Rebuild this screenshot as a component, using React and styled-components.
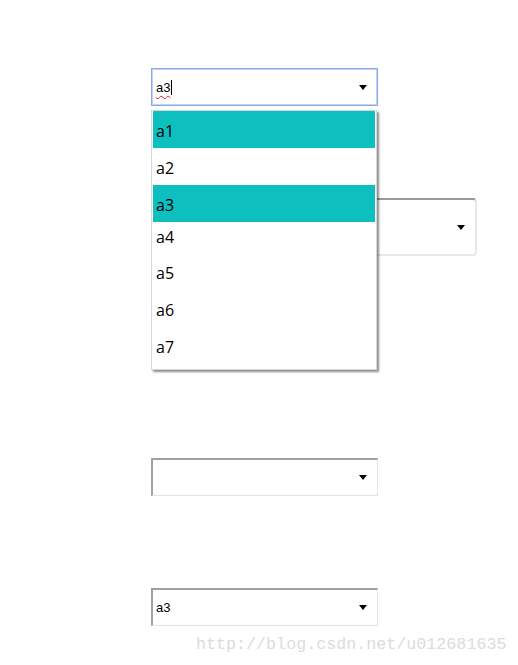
import React from "react";
import styled, { createGlobalStyle } from "styled-components";

const GlobalStyle = createGlobalStyle`
  html, body {
    margin: 0;
    padding: 0;
    background: #ffffff;
  }
  body {
    font-family: "Liberation Sans", Arial, sans-serif;
  }
`;

const Page = styled.div`
  position: relative;
  width: 518px;
  height: 665px;
  padding: 68px 0 0 151px;
  box-sizing: border-box;
  display: flex;
  flex-direction: column;
  align-items: flex-start;
`;

const Field = styled.div`
  position: relative;
  box-sizing: border-box;
  width: ${(p) => p.$width || 227}px;
  height: ${(p) => p.$height || 38}px;
  margin-top: ${(p) => p.$top || 0}px;
  display: flex;
  align-items: center;
  padding: 0 10px 0 3px;
  background: #ffffff;
  border-style: solid;
  border-width: 2px 1px 1px 2px;
  border-color: #a0a0a0 #e2e2e2 #e2e2e2 #a0a0a0;
  border-radius: 0;

  ${(p) => p.$focus && `
    border-width: 1px;
    border-color: #8aa7e6;
    box-shadow: inset 0 0 0 1px #c3d3f4;
    padding-left: 4px;
  `}

  ${(p) => p.$soft && `
    border-width: 2px;
    border-radius: 4px;
    border-color: #9a9a9a #e8e8e8 #e8e8e8 #e8e8e8;
  `}
`;

const Value = styled.span`
  flex: 1;
  font-size: 13px;
  color: #000000;
  line-height: 1;
`;

const Typed = styled.span`
  text-decoration: underline wavy #e02020;
  text-decoration-thickness: 1px;
  text-underline-offset: 3px;
`;

const Caret = styled.span`
  display: inline-block;
  width: 1px;
  height: 15px;
  margin-left: 1px;
  vertical-align: -3px;
  background: #000000;
`;

const Arrow = styled.span`
  width: 0;
  height: 0;
  border-left: 4.5px solid transparent;
  border-right: 4.5px solid transparent;
  border-top: 5px solid #000000;
`;

const Menu = styled.ul`
  position: absolute;
  left: 151px;
  top: 110px;
  width: 226px;
  margin: 0;
  padding: 0 0 5px;
  list-style: none;
  box-sizing: border-box;
  background: #ffffff;
  border: 1px solid #d8d8d8;
  box-shadow: 2px 2px 2px rgba(0, 0, 0, 0.45);
  z-index: 2;
`;

const Option = styled.li`
  box-sizing: border-box;
  height: ${(p) => (p.$short ? 31 : 37)}px;
  padding: 2px 0 ${(p) => (p.$short ? 4 : 0)}px 3px;
  margin: 0 1px;
  display: flex;
  align-items: center;
  font-family: "Open Sans", "Noto Sans", sans-serif;
  font-size: 16px;
  color: #000000;
  background: ${(p) => (p.$active ? "#0ebfbf" : "transparent")};
`;

const Watermark = styled.div`
  position: absolute;
  left: 196px;
  top: 635px;
  font-family: "Liberation Mono", "DejaVu Sans Mono", monospace;
  font-size: 16.7px;
  color: #dcdcdc;
`;

const options = ["a1", "a2", "a3", "a4", "a5", "a6", "a7"];
const highlighted = ["a1", "a3"];

export default function App() {
  return (
    <>
      <GlobalStyle />
      <Page>
        <Field $focus>
          <Value>
            <Typed>a3</Typed>
            <Caret />
          </Value>
          <Arrow />
        </Field>

        <Field $top={92} $width={326} $height={58} $soft>
          <Value />
          <Arrow />
        </Field>

        <Field $top={202}>
          <Value />
          <Arrow />
        </Field>

        <Field $top={92}>
          <Value>a3</Value>
          <Arrow />
        </Field>

        <Menu>
          {options.map((o) => (
            <Option key={o} $active={highlighted.includes(o)} $short={o === "a4"}>
              {o}
            </Option>
          ))}
        </Menu>

        <Watermark>http://blog.csdn.net/u012681635</Watermark>
      </Page>
    </>
  );
}
